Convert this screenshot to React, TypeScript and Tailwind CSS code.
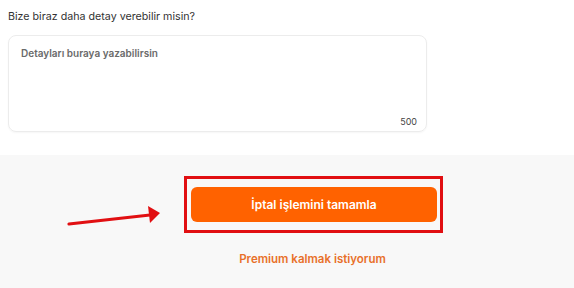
import React from 'react';

const App: React.FC = () => {
  return (
    <div className="relative w-[574px] h-[288px] overflow-hidden bg-white font-['Inter',sans-serif]">
      {/* Details form */}
      <section className="bg-white h-[155px] pl-2 pt-[10px]">
        <p className="text-[10.7px] leading-[14px] text-[#333]">Bize biraz daha detay verebilir misin?</p>
        <div className="mt-[11px] w-[419px] h-[97px] rounded-lg border border-[#ececec] shadow-[0_1px_2px_rgba(0,0,0,0.04)] flex flex-col justify-between pl-3 pr-[9px] pt-[11px] pb-[4px]">
          <span className="text-[10px] leading-[12px] font-semibold text-[#6a6a6a]">Detayları buraya yazabilirsin</span>
          <span className="self-end text-[9px] leading-[10px] text-[#444]">500</span>
        </div>
      </section>

      {/* Actions */}
      <section className="bg-[#f8f8f8] h-[133px] pt-[21px] pl-[184px]">
        <div className="w-[259px] h-[57px] border-[3px] border-[#e10f12] pt-[8px] pl-[4px]">
          <button className="w-[246px] h-[35px] rounded-md bg-[#ff6200] text-white text-[12px] font-semibold">
            İptal işlemini tamamla
          </button>
        </div>
        <div className="w-[259px] text-center mt-[18px] text-[11.5px] font-semibold text-[#e8702a] pr-[2px]">
          Premium kalmak istiyorum
        </div>
      </section>

      {/* Annotation arrow */}
      <svg className="absolute left-[66px] top-[204px]" width="98" height="24" viewBox="0 0 98 24">
        <line x1="3" y1="20" x2="84" y2="11" stroke="#e10f12" strokeWidth="3.2" strokeLinecap="round" />
        <polygon points="82,2 94,9 84,19" fill="#e10f12" />
      </svg>
    </div>
  );
};

export default App;
